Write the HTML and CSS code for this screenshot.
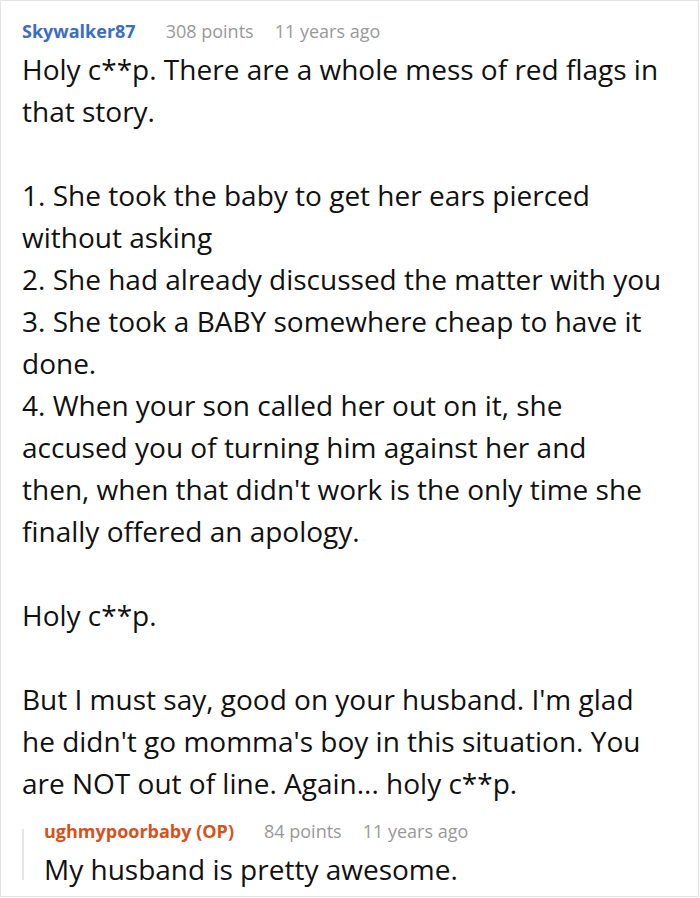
FILE: index.html
```html
<!DOCTYPE html>
<html>
<head>
<meta charset="utf-8">
<link rel="stylesheet" href="styles.css">
</head>
<body>
<div class="card">
  <div class="comment">
    <div class="meta">
      <span class="author">Skywalker87</span>
      <span class="info">308 points</span>
      <span class="info">11 years ago</span>
    </div>
    <div class="text">Holy c**p. There are a whole mess of red flags in that story.<br><br>1. She took the baby to get her ears pierced without asking<br>2. She had already discussed the matter with you<br>3. She took a BABY somewhere cheap to have it done.<br>4. When your son called her out on it, she accused you of turning him against her and then,&nbsp;when that didn't work is the only time she finally offered an apology.<br><br>Holy c**p.<br><br>But I must say, good on your husband. I'm glad he didn't go momma's boy in this situation. You are NOT out of line. Again... holy c**p.</div>
    <div class="reply">
      <div class="meta">
        <span class="author op">ughmypoorbaby (OP)</span>
        <span class="info">84 points</span>
        <span class="info">11 years ago</span>
      </div>
      <div class="text">My husband is pretty awesome.</div>
    </div>
  </div>
</div>
</body>
</html>
```

FILE: styles.css
```css
html, body {
  margin: 0;
  padding: 0;
  background: #fff;
}
.card {
  box-sizing: border-box;
  width: 699px;
  height: 897px;
  border: 1px solid #e3e3e3;
  overflow: hidden;
  font-family: "Open Sans", "Noto Sans", sans-serif;
}
.comment {
  padding: 18px 28px 0 21px;
}
.meta {
  display: flex;
  font-size: 18px;
  line-height: 24px;
  white-space: nowrap;
}
.author {
  font-weight: 700;
  color: #3d6cc4;
  margin-right: 30px;
}
.author.op {
  color: #d4531c;
}
.info {
  color: #999;
  margin-right: 21px;
}
.text {
  margin-top: 5px;
  font-size: 28px;
  line-height: 42px;
  color: #111;
}
.reply {
  position: relative;
  margin-top: 15px;
  padding-left: 22px;
}
.reply::before {
  content: "";
  position: absolute;
  left: 0;
  top: 10px;
  height: 51px;
  width: 2px;
  background: #e6e6e6;
}
.reply .text {
  margin-top: 5px;
}
```
